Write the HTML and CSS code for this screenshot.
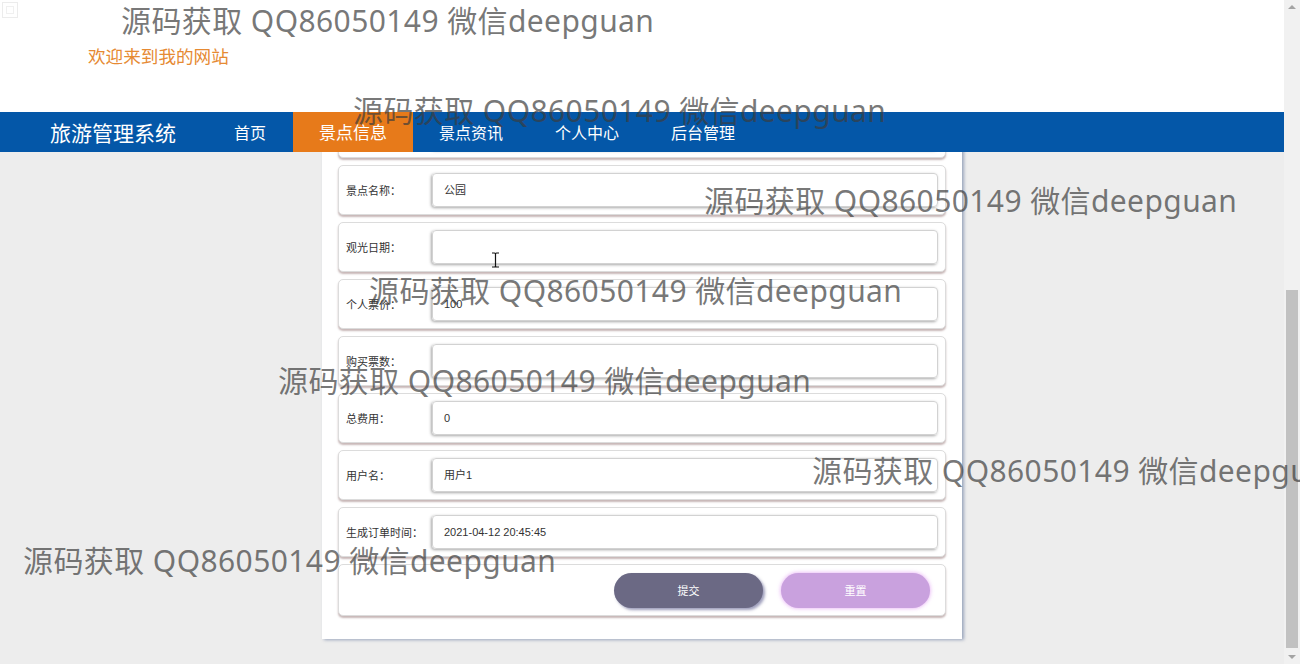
FILE: index.html
```html
<!DOCTYPE html>
<html lang="zh-CN">
<head>
<meta charset="utf-8">
<title>旅游管理系统</title>
<link rel="stylesheet" href="styles.css">
</head>
<body>
<div class="screen">
  <div class="page">
    <header class="top">
      <div class="logo-ph"><div class="logo-inner"></div></div>
      <div class="welcome">欢迎来到我的网站</div>
    </header>
    <nav class="nav">
      <div class="brand">旅游管理系统</div>
      <a class="nav-item first">首页</a>
      <a class="nav-item active">景点信息</a>
      <a class="nav-item">景点资讯</a>
      <a class="nav-item">个人中心</a>
      <a class="nav-item">后台管理</a>
    </nav>
    <main class="content">
      <form class="panel">
        <div class="row"><span class="label">景点编号：</span><div class="field">1</div></div>
        <div class="row"><span class="label">景点名称：</span><div class="field">公园</div></div>
        <div class="row"><span class="label">观光日期：</span><div class="field"></div></div>
        <div class="row"><span class="label">个人票价：</span><div class="field">100</div></div>
        <div class="row"><span class="label">购买票数：</span><div class="field"></div></div>
        <div class="row"><span class="label">总费用：</span><div class="field">0</div></div>
        <div class="row"><span class="label">用户名：</span><div class="field">用户1</div></div>
        <div class="row"><span class="label">生成订单时间：</span><div class="field">2021-04-12 20:45:45</div></div>
        <div class="row btn-row">
          <button type="button" class="btn btn-submit">提交</button>
          <button type="button" class="btn btn-reset">重置</button>
        </div>
      </form>
    </main>
  </div>
  <div class="scrollbar">
    <div class="arrow arrow-up"></div>
    <div class="track"><div class="thumb"></div></div>
    <div class="arrow arrow-down"></div>
  </div>
  <div class="wm wm1">源码获取 QQ86050149 微信deepguan</div>
  <div class="wm wm2">源码获取 QQ86050149 微信deepguan</div>
  <div class="wm wm3">源码获取 QQ86050149 微信deepguan</div>
  <div class="wm wm4">源码获取 QQ86050149 微信deepguan</div>
  <div class="wm wm5">源码获取 QQ86050149 微信deepguan</div>
  <div class="wm wm6">源码获取 QQ86050149 微信deepguan</div>
  <div class="wm wm7">源码获取 QQ86050149 微信deepguan</div>
  <svg class="ibeam" width="9" height="16" viewBox="0 0 9 16">
    <path d="M1 1 H3.5 Q4.5 1 4.5 2 V14 Q4.5 15 3.5 15 H1 M8 1 H5.5 Q4.5 1 4.5 2 M4.5 14 Q4.5 15 5.5 15 H8" fill="none" stroke="#111" stroke-width="1.2"/>
  </svg>
</div>
</body>
</html>
```

FILE: styles.css
```css
* { box-sizing: border-box; }
html, body { margin: 0; padding: 0; overflow: hidden; }
body {
  font-family: "Liberation Sans", "Noto Sans CJK SC", sans-serif;
  color: #333;
}
.screen {
  position: relative;
  width: 1300px;
  height: 664px;
  display: flex;
  overflow: hidden;
}
.page {
  flex: 1;
  display: flex;
  flex-direction: column;
  height: 664px;
}
.top {
  height: 112px;
  background: #fff;
  padding: 2px 0 0 2px;
  flex: none;
}
.logo-ph {
  width: 16px;
  height: 16px;
  border: 1px solid #ececec;
  padding: 3px;
}
.logo-inner {
  width: 100%;
  height: 100%;
  border: 1px solid #f0f0f0;
}
.welcome {
  margin: 28px 0 0 86px;
  font-family: "Noto Sans CJK SC", sans-serif;
  font-size: 17.6px;
  line-height: 20px;
  color: #e68a33;
}
.nav {
  height: 40px;
  flex: none;
  background: #0457a8;
  display: flex;
}
.brand {
  flex: 0 0 210px;
  padding-left: 50px;
  line-height: 40px;
  font-size: 21px;
  color: #fff;
  font-family: "Noto Sans CJK SC", sans-serif;
}
.nav-item {
  padding: 0 26px;
  line-height: 40px;
  font-size: 16px;
  color: #fff;
  font-family: "Noto Sans CJK SC", sans-serif;
}
.nav-item.first { padding: 0 27px 0 24px; }
.nav-item.active {
  background: #e77a1a;
  font-size: 17px;
}
.content {
  flex: 1;
  background: #ededed;
  overflow: hidden;
}
.panel {
  width: 640px;
  margin: -44px auto 0;
  background: #fff;
  padding: 0 16px 23px;
  display: flex;
  flex-direction: column;
  gap: 7px;
  box-shadow: 2px 1px 3px rgba(90, 110, 150, 0.55);
}
.row {
  height: 50px;
  border: 1px solid #dcdcdc;
  border-radius: 5px;
  background: #fff;
  box-shadow: 0 2px 2px rgba(130, 95, 95, 0.45);
  padding: 0 7px;
  display: flex;
  align-items: center;
}
.label {
  width: 86px;
  flex: none;
  font-size: 11px;
  color: #333;
}
.field {
  flex: 1;
  height: 34px;
  border: 1px solid #d2d2d2;
  border-radius: 4px;
  box-shadow: -1px 1px 3px rgba(0, 0, 0, 0.35);
  padding: 0 11px;
  font-size: 11px;
  line-height: 32px;
  color: #333;
}
.btn-row {
  height: 52px;
  justify-content: flex-end;
  gap: 18px;
  padding-right: 15px;
}
.btn {
  width: 149px;
  height: 35px;
  border: none;
  border-radius: 18px;
  color: #fff;
  font-size: 11px;
  font-family: "Noto Sans CJK SC", sans-serif;
  padding: 0;
}
.btn-submit {
  background: #6b6984;
  box-shadow: 2px 2px 3px rgba(60, 60, 120, 0.5);
}
.btn-reset {
  background: #c9a1de;
  box-shadow: 0 0 4px rgba(220, 140, 240, 0.8);
}
.scrollbar {
  width: 16px;
  flex: none;
  background: #f1f1f1;
  display: flex;
  flex-direction: column;
}
.arrow {
  height: 17px;
  flex: none;
  position: relative;
}
.arrow-up::after, .arrow-down::after {
  content: "";
  position: absolute;
  left: 4px;
  border-left: 4px solid transparent;
  border-right: 4px solid transparent;
}
.arrow-up::after { top: 5px; border-bottom: 4px solid #a3a3a3; }
.arrow-down::after { top: 7px; border-top: 4px solid #a3a3a3; }
.track { flex: 1; }
.thumb {
  margin: 273px 2px 0;
  height: 358px;
  background: #c1c1c1;
}
.wm {
  position: absolute;
  height: 30px;
  line-height: 30px;
  white-space: nowrap;
  font-family: "Noto Sans", "Noto Sans CJK SC", sans-serif;
  font-size: 30px;
  letter-spacing: 0.4px;
  color: rgba(60, 60, 60, 0.7);
  pointer-events: none;
}
.wm1 { left: 121px; top: 6px; }
.wm2 { left: 353px; top: 96px; }
.wm3 { left: 704px; top: 186px; }
.wm4 { left: 369px; top: 276px; }
.wm5 { left: 278px; top: 366px; }
.wm6 { left: 812px; top: 456px; }
.wm7 { left: 23px; top: 546px; }
.ibeam {
  position: absolute;
  left: 491px;
  top: 252px;
}
```
